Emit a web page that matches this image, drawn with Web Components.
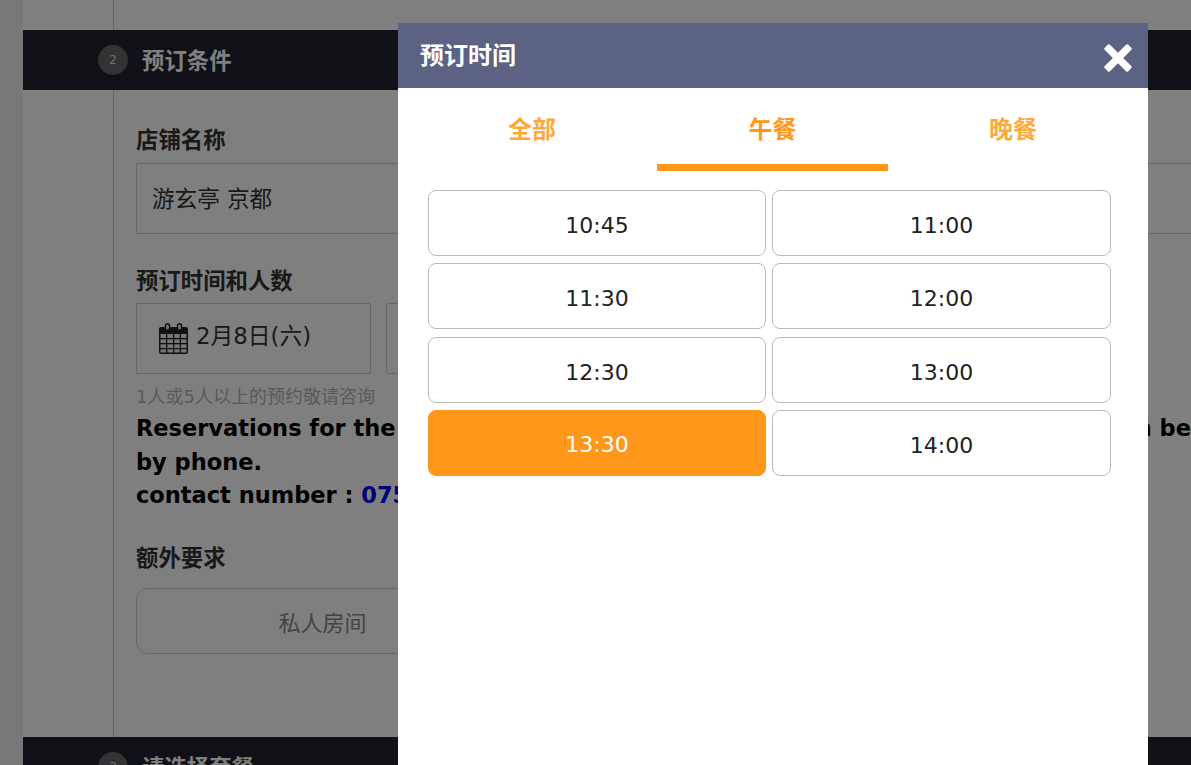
<!DOCTYPE html>
<html lang="zh">
<head>
<meta charset="utf-8">
<title>预订时间</title>
<style>
  html, body { margin: 0; height: 100%; overflow: hidden; background: #eee; }
  body { font-family: "DejaVu Sans", "Noto Sans CJK SC", sans-serif; color: #222; }
</style>
</head>
<body>
<booking-page>
  <step-rail style="height:30px"></step-rail>
  <step-bar num="2">预订条件</step-bar>
  <step-rail style="height:647px">
    <field-label style="margin-top:34px">店铺名称</field-label>
    <form-box style="width:1300px;margin-top:1px">游玄亭 京都</form-box>
    <field-label style="margin-top:31px">预订时间和人数</field-label>
    <date-row></date-row>
    <note-block></note-block>
    <field-label style="margin-top:29px">额外要求</field-label>
    <option-button>私人房间</option-button>
  </step-rail>
  <step-bar num="3">请选择套餐</step-bar>
</booking-page>

<page-overlay></page-overlay>

<time-modal heading="预订时间">
  <time-tabs></time-tabs>
  <time-grid>
    <time-slot>10:45</time-slot>
    <time-slot>11:00</time-slot>
    <time-slot>11:30</time-slot>
    <time-slot>12:00</time-slot>
    <time-slot>12:30</time-slot>
    <time-slot>13:00</time-slot>
    <time-slot selected>13:30</time-slot>
    <time-slot>14:00</time-slot>
  </time-grid>
</time-modal>

<script>
  class Base extends HTMLElement {
    constructor() {
      super();
      this.attachShadow({ mode: 'open' });
    }
    connectedCallback() {
      this.shadowRoot.innerHTML = this.render();
    }
  }

  class BookingPage extends Base {
    render() {
      return `
        <style>
          :host { display: block; width: 1500px; margin-left: 23px; background: #fff; height: 100vh; overflow: hidden; }
        </style>
        <slot></slot>`;
    }
  }

  class StepRail extends Base {
    render() {
      return `
        <style>
          :host { display: flex; flex-direction: column; align-items: flex-start; box-sizing: border-box;
                  margin-left: 90px; padding-left: 22px; border-left: 1px solid #ccc; }
        </style>
        <slot></slot>`;
    }
  }

  class StepBar extends Base {
    render() {
      return `
        <style>
          :host { display: flex; align-items: center; height: 60px; padding-left: 75px; background: #21232c; }
          .num { width: 30px; height: 30px; border-radius: 50%; background: #666; color: #ddd; font-size: 12px;
                 display: flex; align-items: center; justify-content: center; margin-right: 14px; }
          .title { color: #fff; font-size: 22.4px; font-weight: 700; margin-top: -2px; }
        </style>
        <span class="num">${this.getAttribute('num')}</span>
        <span class="title"><slot></slot></span>`;
    }
  }

  class FieldLabel extends Base {
    render() {
      return `
        <style>
          :host { display: block; font-size: 22.4px; font-weight: 700; line-height: 32px; margin-bottom: 6px; color: #333; }
        </style>
        <slot></slot>`;
    }
  }

  class FormBox extends Base {
    render() {
      return `
        <style>
          :host { display: flex; align-items: center; box-sizing: border-box; height: 71px; padding: 0 0 2px 15px;
                  border: 1px solid #ccc; border-radius: 2px; font-size: 22.6px; color: #333; }
        </style>
        <slot></slot>`;
    }
  }

  class DateRow extends Base {
    render() {
      return `
        <style>
          :host { display: flex; gap: 15px; }
          .box { display: flex; align-items: center; box-sizing: border-box; height: 71px; border: 1px solid #ccc;
                 border-radius: 2px; font-size: 22.8px; color: #333; }
          .date { width: 235px; padding-left: 22px; gap: 8px; }
          .people { width: 300px; }
          svg { display: block; }
          .txt { margin-top: -9px; }
        </style>
        <div class="box date">
          <svg width="29" height="31" viewBox="0 0 29 31">
            <rect x="1" y="11" width="27" height="19" fill="#eee"/>
            <path fill="#222" d="M2 4h4v3h5V4h7v3h5V4h4a2 2 0 0 1 2 2v23a2 2 0 0 1-2 2H2a2 2 0 0 1-2-2V6a2 2 0 0 1 2-2zM1.500 11v18.500h26V11z" fill-rule="evenodd"/>
            <rect x="6.500" y=".7" width="4" height="6.500" rx="2" fill="#eee" stroke="#222" stroke-width="1.400"/>
            <rect x="18.500" y=".7" width="4" height="6.500" rx="2" fill="#eee" stroke="#222" stroke-width="1.400"/>
            <g fill="#222">
              <rect x="7" y="11" width="1.300" height="19"/>
              <rect x="14" y="11" width="1.300" height="19"/>
              <rect x="20.700" y="11" width="1.300" height="19"/>
              <rect x="1" y="15" width="27" height="1.300"/>
              <rect x="1" y="20" width="27" height="1.300"/>
              <rect x="1" y="25" width="27" height="1.300"/>
            </g>
          </svg>
          <span class="txt">2月8日(六)</span>
        </div>
        <div class="box people"></div>`;
    }
  }

  class NoteBlock extends Base {
    render() {
      return `
        <style>
          :host { display: block; width: 1200px; }
          .hint { font-size: 18px; line-height: 24px; margin-top: 11px; color: #b4b4b4; }
          .msg { font-size: 22.5px; font-weight: 700; line-height: 33.6px; color: #000; white-space: nowrap; margin-top: 3px; }
          .gap { word-spacing: 42px; }
          a { color: #00f; text-decoration: none; }
        </style>
        <div class="hint">1人或5人以上的预约敬请咨询</div>
        <div class="msg">
          Reservations for the <span class="gap">private room and 5 or more people</span> can be made<br>
          by phone.<br>
          contact number : <a>075-708-8888</a>
        </div>`;
    }
  }

  class OptionButton extends Base {
    render() {
      return `
        <style>
          :host { display: flex; align-items: center; justify-content: center; box-sizing: border-box; width: 372px; height: 66px;
                  margin-top: 8px; padding-left: 1px; border: 1px solid #ccc; border-radius: 12px; font-size: 22px; color: #888; }
        </style>
        <slot></slot>`;
    }
  }

  class PageOverlay extends Base {
    render() {
      return `
        <style>
          :host { display: block; position: fixed; inset: 0; background: rgba(0, 0, 0, .5); }
        </style>`;
    }
  }

  class TimeModal extends Base {
    render() {
      return `
        <style>
          :host { position: fixed; left: 398px; top: 23px; bottom: 0; width: 750px; background: #fff; display: block; }
          header { display: flex; align-items: center; justify-content: space-between; height: 65px; padding: 0 14px 0 22px;
                   background: #5c6284; color: #fff; font-size: 24px; font-weight: 700; }
          header span { margin-top: -4px; }
          svg { display: block; margin-top: 5px; margin-right: 2px; }
        </style>
        <header>
          <span>${this.getAttribute('heading')}</span>
          <svg width="28" height="28" viewBox="0 0 28 28">
            <path fill="#fff" d="M6 .8 14 8.800 22 .8a1.600 1.600 0 0 1 2.300 0l2.900 2.900a1.600 1.600 0 0 1 0 2.300L19.200 14l8 8a1.600 1.600 0 0 1 0 2.300l-2.900 2.900a1.600 1.600 0 0 1-2.300 0L14 19.200l-8 8a1.600 1.600 0 0 1-2.300 0L.8 24.300a1.600 1.600 0 0 1 0-2.300L8.800 14 .8 6a1.600 1.600 0 0 1 0-2.300L3.700 .8A1.600 1.600 0 0 1 6 .8z"/>
          </svg>
        </header>
        <slot></slot>`;
    }
  }

  class TimeTabs extends Base {
    render() {
      return `
        <style>
          :host { display: grid; grid-template-columns: 240px 241px 240px; padding-left: 14px; height: 83px; }
          div { display: flex; justify-content: center; padding-top: 25px; box-sizing: border-box; margin: 0 5px; height: 83px;
                font-size: 24px; font-weight: 700; line-height: 34px; color: #ffa83a; }
          .on { color: #ff971b; border-bottom: 7px solid #ff971b; }
        </style>
        <div>全部</div>
        <div class="on">午餐</div>
        <div>晚餐</div>`;
    }
  }

  class TimeGrid extends Base {
    render() {
      return `
        <style>
          :host { display: grid; grid-template-columns: 338px 339px; column-gap: 6px; row-gap: 7.4px;
                  margin: 19px 37px 0 30px; }
        </style>
        <slot></slot>`;
    }
  }

  class TimeSlot extends Base {
    render() {
      return `
        <style>
          :host { display: flex; align-items: center; justify-content: center; box-sizing: border-box; height: 66px;
                  border: 1px solid #bbb; border-radius: 8px; font-size: 22px; color: #222; padding-top: 4.600px; }
          :host([selected]) { background: #ff971b; border-color: #ff971b; color: #fff; padding-top: 2.600px; }
        </style>
        <slot></slot>`;
    }
  }

  customElements.define('booking-page', BookingPage);
  customElements.define('step-rail', StepRail);
  customElements.define('step-bar', StepBar);
  customElements.define('field-label', FieldLabel);
  customElements.define('form-box', FormBox);
  customElements.define('date-row', DateRow);
  customElements.define('note-block', NoteBlock);
  customElements.define('option-button', OptionButton);
  customElements.define('page-overlay', PageOverlay);
  customElements.define('time-modal', TimeModal);
  customElements.define('time-tabs', TimeTabs);
  customElements.define('time-grid', TimeGrid);
  customElements.define('time-slot', TimeSlot);
</script>
</body>
</html>
